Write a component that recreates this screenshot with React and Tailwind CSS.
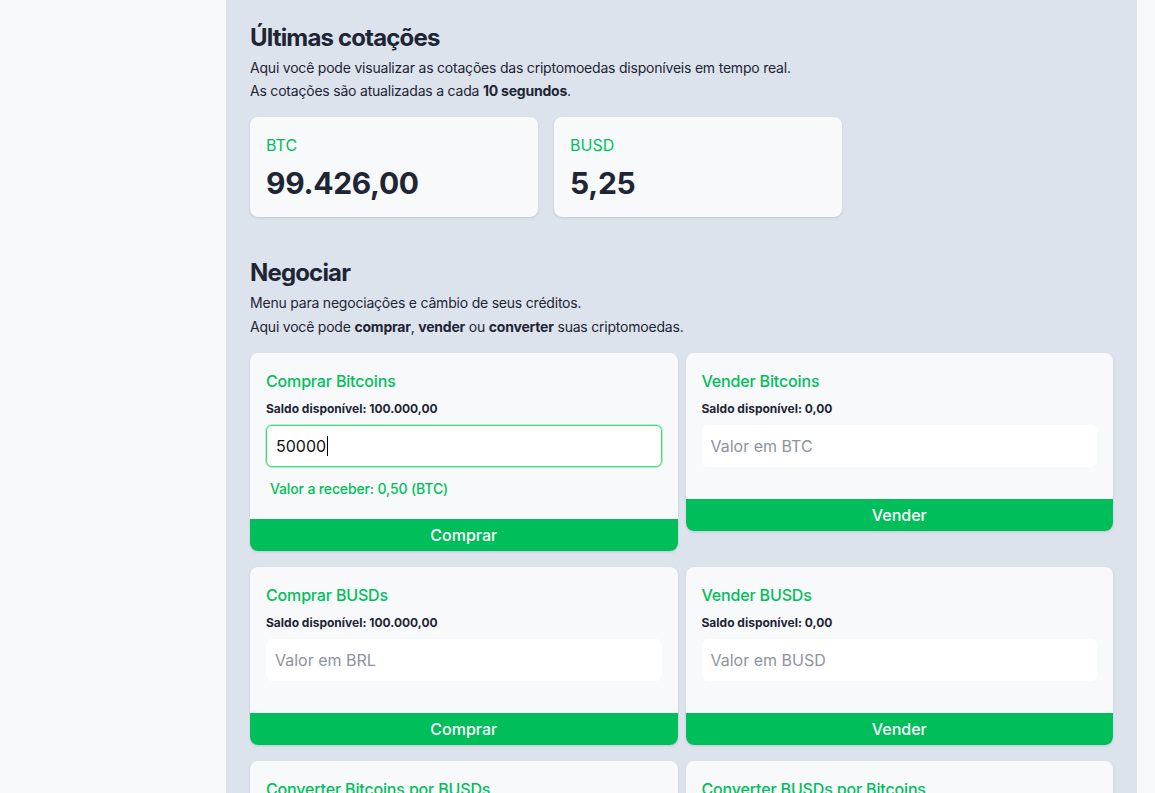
import React from "react";

const green = "text-[#00bf5a]";

function Quote({ label, value }) {
  return (
    <div className="w-72 rounded-lg bg-[#f7f9fb] px-4 pt-4 pb-4 shadow-sm">
      <div className={`text-base leading-6 ${green}`}>{label}</div>
      <div className="mt-2 text-3xl font-bold leading-9 tracking-[-0.01em] text-[#1e2534]">{value}</div>
    </div>
  );
}

function TradeCard({ title, saldo, placeholder, value, extra, button }) {
  return (
    <div className="overflow-hidden rounded-lg bg-[#f7f9fb] shadow-sm">
      <div className={`px-4 pt-4 ${extra ? "pb-5" : "pb-8"}`}>
        <div className={`text-base font-medium leading-6 tracking-[-0.01em] ${green}`}>{title}</div>
        <div className="mt-2 text-xs font-bold leading-4 text-[#1e2534]">Saldo disponível: {saldo}</div>
        {value ? (
          <div className="mt-2 flex h-[42px] items-center rounded-md border border-[#3ddc7a] bg-white px-[9px] text-base text-[#111] shadow-[0_0_0_1px_rgba(61,220,122,0.35)]">
            {value}
            <span className="ml-px inline-block h-5 w-px bg-black"></span>
          </div>
        ) : (
          <input
            className="mt-2 block h-[42px] w-full rounded-md bg-white px-[9px] text-base text-[#111] outline-none placeholder:text-[#8d939e]"
            placeholder={placeholder}
          />
        )}
        {extra && (
          <div className={`mt-3 pl-1 text-sm font-medium leading-5 tracking-[-0.01em] ${green}`}>{extra}</div>
        )}
      </div>
      <button className="block h-8 w-full bg-[#00bf5a] text-base font-medium text-white">{button}</button>
    </div>
  );
}

export default function App() {
  return (
    <div
      className="flex min-h-screen bg-[#f7f9fb]"
      style={{ fontFamily: "Inter, 'Noto Sans', sans-serif" }}
    >
      <aside className="w-[226px] shrink-0 bg-[#f7f9fb]"></aside>
      <main className="flex-1 bg-[#dde3ed] px-6 pt-6 pb-10 text-[#1e2534]">
        <h1 className="text-2xl font-bold leading-7 tracking-[-0.035em]">Últimas cotações</h1>
        <p className="mt-1 text-sm leading-[23px] tracking-[-0.015em]">
          Aqui você pode visualizar as cotações das criptomoedas disponíveis em tempo real.
        </p>
        <p className="text-sm leading-[23px] tracking-[-0.015em]">
          As cotações são atualizadas a cada <b>10 segundos</b>.
        </p>
        <div className="mt-[15px] flex gap-4">
          <Quote label="BTC" value="99.426,00" />
          <Quote label="BUSD" value="5,25" />
        </div>

        <h2 className="mt-[42px] text-2xl font-bold leading-7 tracking-[-0.035em]">Negociar</h2>
        <p className="mt-1 text-sm leading-6 tracking-[-0.015em]">Menu para negociações e câmbio de seus créditos.</p>
        <p className="text-sm leading-6 tracking-[-0.015em]">
          Aqui você pode <b>comprar</b>, <b>vender</b> ou <b>converter</b> suas criptomoedas.
        </p>

        <div className="mt-[14px] grid grid-cols-2 items-start gap-x-2 gap-y-4">
          <TradeCard
            title="Comprar Bitcoins"
            saldo="100.000,00"
            value="50000"
            extra="Valor a receber: 0,50 (BTC)"
            button="Comprar"
          />
          <TradeCard title="Vender Bitcoins" saldo="0,00" placeholder="Valor em BTC" button="Vender" />
          <TradeCard title="Comprar BUSDs" saldo="100.000,00" placeholder="Valor em BRL" button="Comprar" />
          <TradeCard title="Vender BUSDs" saldo="0,00" placeholder="Valor em BUSD" button="Vender" />
          <TradeCard title="Converter Bitcoins por BUSDs" saldo="0,00" placeholder="Valor em BTC" button="Converter" />
          <TradeCard title="Converter BUSDs por Bitcoins" saldo="0,00" placeholder="Valor em BUSD" button="Converter" />
        </div>
      </main>
      <div className="w-[18px] shrink-0 bg-[#f7f9fb]"></div>
    </div>
  );
}
